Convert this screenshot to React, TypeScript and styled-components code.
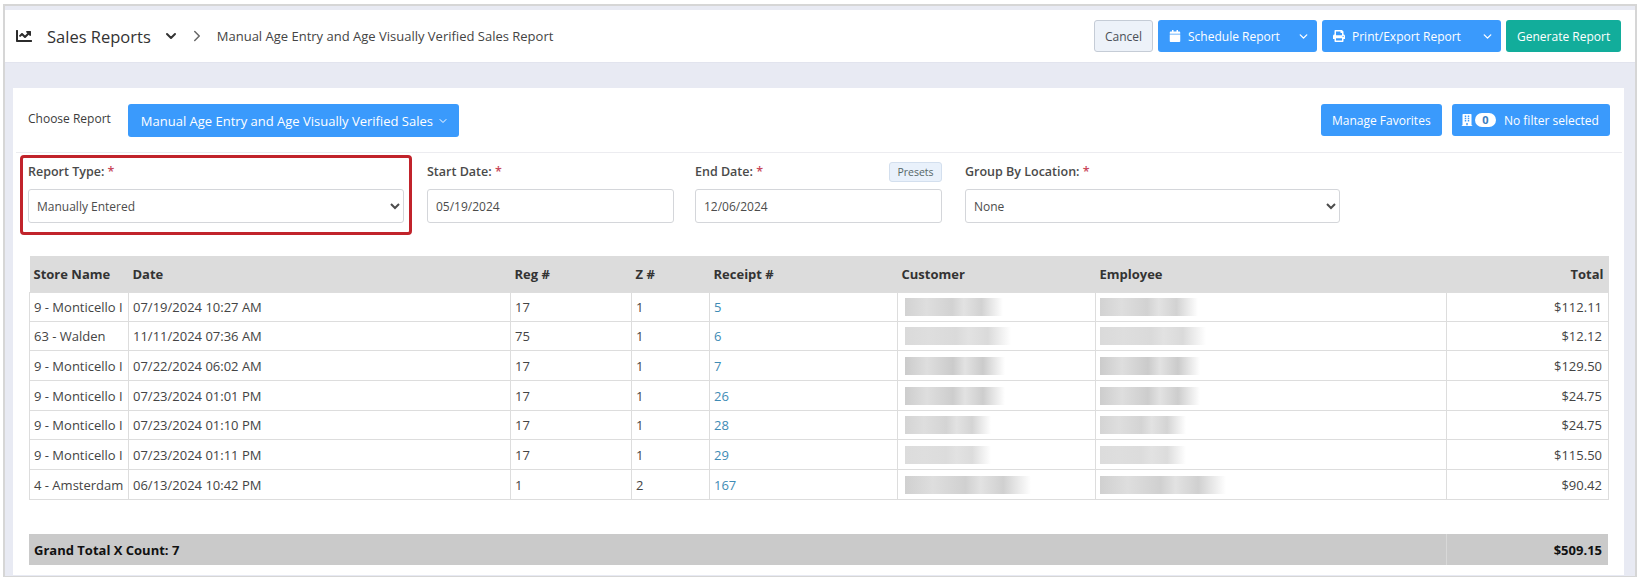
import styled, { createGlobalStyle } from "styled-components";
import { FaCalendar, FaPrint, FaBuilding, FaChartLine } from "react-icons/fa";
import { FiChevronDown, FiChevronRight } from "react-icons/fi";

const rows = [
  { store: "9 - Monticello I", date: "07/19/2024 10:27 AM", reg: "17", z: "1", receipt: "5", total: "$112.11", name: 98, h: 29, shade: "#d2d2d2" },
  { store: "63 - Walden", date: "11/11/2024 07:36 AM", reg: "75", z: "1", receipt: "6", total: "$12.12", name: 106, h: 29, shade: "#dadada" },
  { store: "9 - Monticello I", date: "07/22/2024 06:02 AM", reg: "17", z: "1", receipt: "7", total: "$129.50", name: 100, h: 30, shade: "#cbcbcb" },
  { store: "9 - Monticello I", date: "07/23/2024 01:01 PM", reg: "17", z: "1", receipt: "26", total: "$24.75", name: 100, h: 30, shade: "#cdcdcd" },
  { store: "9 - Monticello I", date: "07/23/2024 01:10 PM", reg: "17", z: "1", receipt: "28", total: "$24.75", name: 86, h: 29, shade: "#d4d4d4" },
  { store: "9 - Monticello I", date: "07/23/2024 01:11 PM", reg: "17", z: "1", receipt: "29", total: "$115.50", name: 86, h: 30, shade: "#dcdcdc" },
  { store: "4 - Amsterdam", date: "06/13/2024 10:42 PM", reg: "1", z: "2", receipt: "167", total: "$90.42", name: 126, h: 30, shade: "#d0d0d0" },
];

const GlobalStyle = createGlobalStyle`
  html, body {
    margin: 0;
    background: #fff;
  }
  body {
    font-family: "Open Sans", "Liberation Sans", sans-serif;
    font-size: 12px;
    color: #3c3c3c;
  }
`;

const Frame = styled.div`
  box-sizing: border-box;
  width: 1634px;
  height: 573px;
  margin: 4px 0 0 3px;
  border: 2px solid #d6d6d6;
  border-bottom-width: 1px;
  background: #e8eaf3;
  overflow: hidden;
`;

const Header = styled.header`
  box-sizing: border-box;
  height: 53px;
  margin-top: 4px;
  padding: 0 14px 0 11px;
  background: #fff;
  display: flex;
  align-items: center;
  border-bottom: 1px solid #e2e4ee;
`;

const ChartIcon = styled(FaChartLine)`
  width: 16px;
  height: 16px;
  color: #2b2b2b;
`;

const Title = styled.h1`
  margin: 0 0 0 15px;
  font-size: 16.5px;
  font-weight: 400;
  color: #333;
`;

const TitleChevron = styled(FiChevronDown)`
  width: 16px;
  height: 16px;
  margin-left: 12px;
  stroke-width: 3;
  color: #333;
`;

const CrumbChevron = styled(FiChevronRight)`
  width: 18px;
  height: 18px;
  margin-left: 9px;
  color: #666;
`;

const Crumb = styled.span`
  margin-left: 11px;
  font-size: 13px;
  color: #444;
`;

const HeaderActions = styled.div`
  margin-left: auto;
  display: flex;
  gap: 5px;
`;

const Button = styled.button<{ $tone?: "blue" | "teal" | "light"; $width?: number }>`
  box-sizing: border-box;
  height: 32px;
  width: ${({ $width }) => ($width ? `${$width}px` : "auto")};
  padding: 0 10px;
  display: flex;
  align-items: center;
  border-radius: 3px;
  font-family: inherit;
  font-size: 12px;
  white-space: nowrap;
  border: 1px solid ${({ $tone }) => ($tone === "light" ? "#c5ccd6" : "transparent")};
  color: ${({ $tone }) => ($tone === "light" ? "#4a4f57" : "#fff")};
  background: ${({ $tone }) =>
    $tone === "teal" ? "#12ad9b" : $tone === "light" ? "#edf2f9" : "#3a9afc"};
`;

const ButtonIcon = styled.span<{ $gap?: number }>`
  display: flex;
  flex-shrink: 0;
  margin-right: ${({ $gap }) => $gap ?? 7}px;
  font-size: 12px;
`;

const Caret = styled(FiChevronDown)`
  flex-shrink: 0;
  margin: 0 -4px 0 auto;
  width: 13px;
  height: 13px;
  stroke-width: 2.5;
`;

const Card = styled.main`
  box-sizing: border-box;
  height: 487px;
  margin: 25px 11px 0 8px;
  padding: 0 2px 0 3px;
  background: #fff;
`;

const TopBar = styled.div`
  box-sizing: border-box;
  height: 65px;
  padding: 16px 12px 0 12px;
  border-bottom: 1px solid #ececf0;
  display: flex;
  align-items: flex-start;
`;

const ChooseLabel = styled.span`
  margin: 6px 17px 0 0;
  font-size: 12px;
  font-weight: 500;
  color: #3c3c3c;
`;

const ReportMenu = styled(Button)`
  height: 33px;
  width: 331px;
  padding: 0 12px;
  font-size: 13px;
`;

const MenuCaret = styled(FiChevronDown)`
  flex-shrink: 0;
  margin-left: 4px;
  width: 12px;
  height: 12px;
`;

const TopBarRight = styled.div`
  margin-left: auto;
  display: flex;
  gap: 10px;
`;

const FilterButton = styled(Button)`
  padding: 0 8px;
`;

const CountBadge = styled.span`
  flex-shrink: 0;
  width: 21px;
  height: 14px;
  margin-right: 8px;
  border-radius: 7px;
  background: #fff;
  color: #3a7cc0;
  font-size: 11px;
  font-weight: 700;
  line-height: 14px;
  text-align: center;
`;

const Filters = styled.div`
  display: flex;
  align-items: flex-start;
  margin-top: 2px;
  padding-left: 4px;
`;

const Highlighted = styled.div`
  box-sizing: border-box;
  width: 392px;
  height: 80px;
  padding: 6px 5px 0 5px;
  border: 3px solid #c1232b;
  border-radius: 4px;
`;

const Field = styled.div<{ $width: number; $gap?: number }>`
  position: relative;
  width: ${({ $width }) => $width}px;
  margin-left: ${({ $gap }) => $gap ?? 0}px;
  padding-top: 9px;
`;

const Label = styled.label`
  display: block;
  height: 16px;
  line-height: 16px;
  margin-bottom: 9px;
  font-size: 12.5px;
  font-weight: 600;
  color: #4a4a4a;
`;

const Required = styled.span`
  color: #c9485b;
`;

const inputLook = `
  box-sizing: border-box;
  display: block;
  width: 100%;
  height: 34px;
  border: 1px solid #d4d6da;
  border-radius: 3px;
  background-color: #fff;
  font-family: inherit;
  font-size: 12px;
  color: #4c4c4c;
`;

const Select = styled.select`
  ${inputLook}
  padding: 0 0 0 4px;
`;

const Input = styled.input`
  ${inputLook}
  padding: 0 8px;
`;

const Presets = styled.span`
  position: absolute;
  top: 7px;
  right: 0;
  box-sizing: border-box;
  width: 53px;
  height: 20px;
  border: 1px solid #d3dfee;
  border-radius: 3px;
  background: #e9f1fb;
  font-size: 10.5px;
  line-height: 18px;
  text-align: center;
  color: #566;
`;

const TableWrap = styled.div`
  padding: 0 0 0 13px;
  margin-top: 21px;
`;

const Table = styled.table`
  width: 1579px;
  border-collapse: collapse;
  table-layout: fixed;
`;

const Th = styled.th<{ $right?: boolean }>`
  height: 36px;
  padding: 0 5px 0 4px;
  background: #dcdcdc;
  font-size: 13px;
  font-weight: 700;
  color: #333;
  text-align: ${({ $right }) => ($right ? "right" : "left")};
`;

const Td = styled.td<{ $right?: boolean }>`
  padding: 0 ${({ $right }) => ($right ? 6 : 4)}px 0 4px;
  border: 1px solid #dddddd;
  font-size: 13px;
  color: #444;
  white-space: nowrap;
  overflow: hidden;
  text-align: ${({ $right }) => ($right ? "right" : "left")};
`;

const ReceiptLink = styled.a`
  color: #3e8bb5;
`;

const Redacted = styled.div<{ $tone: string; $inset: number }>`
  height: 18px;
  margin-left: ${({ $inset }) => $inset}px;
  background: linear-gradient(
    90deg,
    ${({ $tone }) => $tone} 0,
    #dedede 22%,
    ${({ $tone }) => $tone} 48%,
    #e2e2e2 60%,
    ${({ $tone }) => $tone} 78%,
    #ffffff 100%
  );
  filter: blur(0.6px);
`;

const TotalTable = styled(Table)`
  margin-top: 34px;
`;

const TotalCell = styled.td<{ $right?: boolean }>`
  height: 31px;
  padding: 0 6px 0 5px;
  background: #cacaca;
  font-size: 13px;
  font-weight: 700;
  color: #111;
  text-align: ${({ $right }) => ($right ? "right" : "left")};
  border-left: ${({ $right }) => ($right ? "1px solid #d8d8d8" : "none")};
`;

function App() {
  return (
    <>
      <GlobalStyle />
      <Frame>
        <Header>
          <ChartIcon />
          <Title>Sales Reports</Title>
          <TitleChevron />
          <CrumbChevron />
          <Crumb>Manual Age Entry and Age Visually Verified Sales Report</Crumb>
          <HeaderActions>
            <Button $tone="light" $width={59}>Cancel</Button>
            <Button $width={159}>
              <ButtonIcon><FaCalendar /></ButtonIcon>
              Schedule Report
              <Caret />
            </Button>
            <Button $width={179}>
              <ButtonIcon><FaPrint /></ButtonIcon>
              Print/Export Report
              <Caret />
            </Button>
            <Button $tone="teal" $width={115}>Generate Report</Button>
          </HeaderActions>
        </Header>
        <Card>
          <TopBar>
            <ChooseLabel>Choose Report</ChooseLabel>
            <ReportMenu>
              Manual Age Entry and Age Visually Verified Sales
              <MenuCaret />
            </ReportMenu>
            <TopBarRight>
              <Button $width={121}>Manage Favorites</Button>
              <FilterButton $width={158}>
                <ButtonIcon $gap={2}><FaBuilding /></ButtonIcon>
                <CountBadge>0</CountBadge>
                No filter selected
              </FilterButton>
            </TopBarRight>
          </TopBar>
          <Filters>
            <Highlighted>
              <Label>Report Type: <Required>*</Required></Label>
              <Select defaultValue="Manually Entered">
                <option>Manually Entered</option>
              </Select>
            </Highlighted>
            <Field $width={247} $gap={15}>
              <Label>Start Date: <Required>*</Required></Label>
              <Input defaultValue="05/19/2024" />
            </Field>
            <Field $width={247} $gap={21}>
              <Label>End Date: <Required>*</Required></Label>
              <Presets>Presets</Presets>
              <Input defaultValue="12/06/2024" />
            </Field>
            <Field $width={375} $gap={23}>
              <Label>Group By Location: <Required>*</Required></Label>
              <Select defaultValue="None">
                <option>None</option>
              </Select>
            </Field>
          </Filters>
          <TableWrap>
            <Table>
              <colgroup>
                <col style={{ width: 99 }} />
                <col style={{ width: 382 }} />
                <col style={{ width: 121 }} />
                <col style={{ width: 78 }} />
                <col style={{ width: 188 }} />
                <col style={{ width: 198 }} />
                <col style={{ width: 351 }} />
                <col style={{ width: 162 }} />
              </colgroup>
              <thead>
                <tr>
                  <Th>Store Name</Th>
                  <Th>Date</Th>
                  <Th>Reg #</Th>
                  <Th>Z #</Th>
                  <Th>Receipt #</Th>
                  <Th>Customer</Th>
                  <Th>Employee</Th>
                  <Th $right>Total</Th>
                </tr>
              </thead>
              <tbody>
                {rows.map((row) => (
                  <tr key={row.date} style={{ height: row.h }}>
                    <Td>{row.store}</Td>
                    <Td>{row.date}</Td>
                    <Td>{row.reg}</Td>
                    <Td>{row.z}</Td>
                    <Td><ReceiptLink>{row.receipt}</ReceiptLink></Td>
                    <Td><Redacted $tone={row.shade} $inset={3} style={{ width: row.name }} /></Td>
                    <Td><Redacted $tone={row.shade} $inset={0} style={{ width: row.name }} /></Td>
                    <Td $right>{row.total}</Td>
                  </tr>
                ))}
              </tbody>
            </Table>
            <TotalTable>
              <colgroup>
                <col />
                <col style={{ width: 162 }} />
              </colgroup>
              <tbody>
                <tr>
                  <TotalCell>Grand Total X Count: 7</TotalCell>
                  <TotalCell $right>$509.15</TotalCell>
                </tr>
              </tbody>
            </TotalTable>
          </TableWrap>
        </Card>
      </Frame>
    </>
  );
}

export default App;
